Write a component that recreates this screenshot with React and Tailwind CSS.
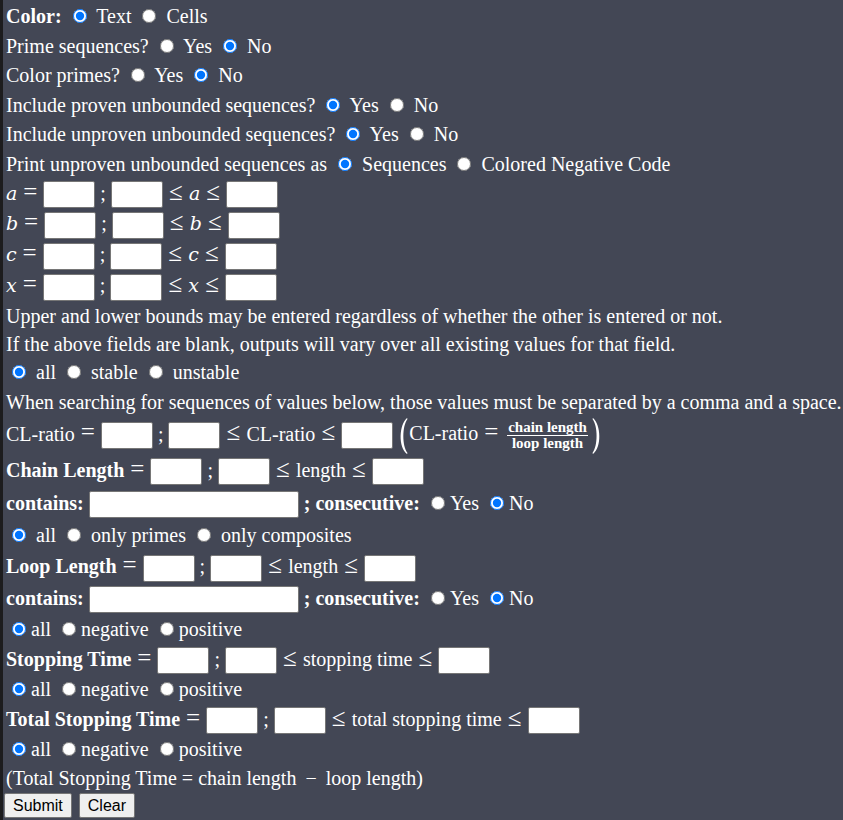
const R = ({ checked, name }) => (
  <input
    type="radio"
    name={name}
    defaultChecked={checked}
    className="ml-[6px] mr-[5px] align-middle w-[14px] h-[14px] relative top-[-2px]"
  />
);

const Box = ({ w = "w-[52px]" }) => (
  <input
    type="text"
    className={`${w} h-[27px] bg-white border border-[#767676] rounded-[2px] align-middle text-black`}
  />
);

const Rel = ({ c }) => (
  <span className="inline-block w-[16px] text-center mx-[5px] text-[25px] leading-[20px]">{c}</span>
);

const V = ({ c }) => (
  <span className="italic text-[19px]" style={{ fontFamily: '"DejaVu Serif", serif' }}>
    {c}
  </span>
);

const Row = ({ h, children }) => (
  <div className={`flex items-center ${h}`}>
    <div className="whitespace-nowrap">{children}</div>
  </div>
);

const VarRow = ({ h, v }) => (
  <Row h={h}>
    <V c={v} />
    <Rel c="=" />
    <Box /> ; <Box />
    <Rel c="≤" />
    <V c={v} />
    <Rel c="≤" />
    <Box />
  </Row>
);

const Paren = ({ right }) => (
  <svg width="13" height="38" viewBox="0 0 13 38" className="inline-block align-middle">
    <path
      d={
        right
          ? "M2 1 C10 8 11 30 2 37 L1.5 36 C7 29 7 9 1.5 2 Z"
          : "M11 1 C3 8 2 30 11 37 L11.5 36 C6 29 6 9 11.5 2 Z"
      }
      fill="white"
    />
  </svg>
);

const Frac = ({ top, bottom }) => (
  <span className="inline-flex flex-col items-center align-middle mx-[3px] font-bold text-[15px]">
    <span className="leading-[15px] px-[1px] border-b border-white">{top}</span>
    <span className="leading-[15px] px-[1px]">{bottom}</span>
  </span>
);

const Tri = ({ name }) => (
  <>
    <R checked name={name} />all <R name={name} />negative <R name={name} />positive
  </>
);

const btn =
  "h-[25px] px-[8px] bg-[#efefef] border border-[#767676] rounded-[2px] text-black text-[16px]";

export default function App() {
  return (
    <div
      className="min-h-screen bg-[#434755] text-white border-l-[3px] border-[#1c1c1e] pl-[3px] text-[20px]"
      style={{ fontFamily: '"Liberation Serif", "Times New Roman", serif' }}
    >
      <Row h="h-[31px]">
        <b>Color:</b> <R checked name="color" /> Text <R name="color" /> Cells
      </Row>
      <Row h="h-[29px]">
        Prime sequences? <R name="prime" /> Yes <R checked name="prime" /> No
      </Row>
      <Row h="h-[30px]">
        Color primes? <R name="cprime" /> Yes <R checked name="cprime" /> No
      </Row>
      <Row h="h-[29px]">
        Include proven unbounded sequences? <R checked name="pu" /> Yes <R name="pu" /> No
      </Row>
      <Row h="h-[30px]">
        Include unproven unbounded sequences? <R checked name="uu" /> Yes <R name="uu" /> No
      </Row>
      <Row h="h-[29px]">
        Print unproven unbounded sequences as <R checked name="print" /> Sequences{" "}
        <R name="print" /> Colored Negative Code
      </Row>
      <VarRow h="h-[30px]" v="a" />
      <VarRow h="h-[31px]" v="b" />
      <VarRow h="h-[31px]" v="c" />
      <VarRow h="h-[31px]" v="x" />
      <Row h="h-[29px]">
        Upper and lower bounds may be entered regardless of whether the other is entered or not.
      </Row>
      <Row h="h-[28px]">
        If the above fields are blank, outputs will vary over all existing values for that field.
      </Row>
      <Row h="h-[28px]">
        <R checked name="stab" /> all <R name="stab" /> stable <R name="stab" /> unstable
      </Row>
      <Row h="h-[32px]">
        When searching for sequences of values below, those values must be separated by a comma and a space.
      </Row>
      <Row h="h-[35px]">
        CL-ratio
        <Rel c="=" />
        <Box /> ; <Box />
        <Rel c="≤" />
        CL-ratio
        <Rel c="≤" />
        <Box />
        <span className="ml-[3px]">
          <Paren />
          CL-ratio
          <Rel c="=" />
          <Frac top="chain length" bottom="loop length" />
          <Paren right />
        </span>
      </Row>
      <Row h="h-[34px]">
        <b>Chain Length</b>
        <Rel c="=" />
        <Box /> ; <Box />
        <Rel c="≤" />
        length
        <Rel c="≤" />
        <Box />
      </Row>
      <Row h="h-[32px]">
        <b>contains:</b> <Box w="w-[210px]" /> <b>; consecutive:</b> <R name="cc1" />Yes{" "}
        <R checked name="cc1" />No
      </Row>
      <Row h="h-[32px]">
        <R checked name="comp" /> all <R name="comp" /> only primes <R name="comp" /> only composites
      </Row>
      <Row h="h-[31px]">
        <b>Loop Length</b>
        <Rel c="=" />
        <Box /> ; <Box />
        <Rel c="≤" />
        length
        <Rel c="≤" />
        <Box />
      </Row>
      <Row h="h-[32px]">
        <b>contains:</b> <Box w="w-[210px]" /> <b>; consecutive:</b> <R name="cc2" />Yes{" "}
        <R checked name="cc2" />No
      </Row>
      <Row h="h-[30px]">
        <Tri name="t1" />
      </Row>
      <Row h="h-[30px]">
        <b>Stopping Time</b>
        <Rel c="=" />
        <Box /> ; <Box />
        <Rel c="≤" />
        stopping time
        <Rel c="≤" />
        <Box />
      </Row>
      <Row h="h-[30px]">
        <Tri name="t2" />
      </Row>
      <Row h="h-[30px]">
        <b>Total Stopping Time</b>
        <Rel c="=" />
        <Box /> ; <Box />
        <Rel c="≤" />
        total stopping time
        <Rel c="≤" />
        <Box />
      </Row>
      <Row h="h-[30px]">
        <Tri name="t3" />
      </Row>
      <Row h="h-[27px]">
        (Total Stopping Time = chain length <span className="mx-[4px]">−</span> loop length)
      </Row>
      <div className="flex items-center h-[28px] gap-[7px] ml-[-2px]">
        <button className={btn} style={{ fontFamily: '"Liberation Sans", Arial, sans-serif' }}>
          Submit
        </button>
        <button className={btn} style={{ fontFamily: '"Liberation Sans", Arial, sans-serif' }}>
          Clear
        </button>
      </div>
    </div>
  );
}
